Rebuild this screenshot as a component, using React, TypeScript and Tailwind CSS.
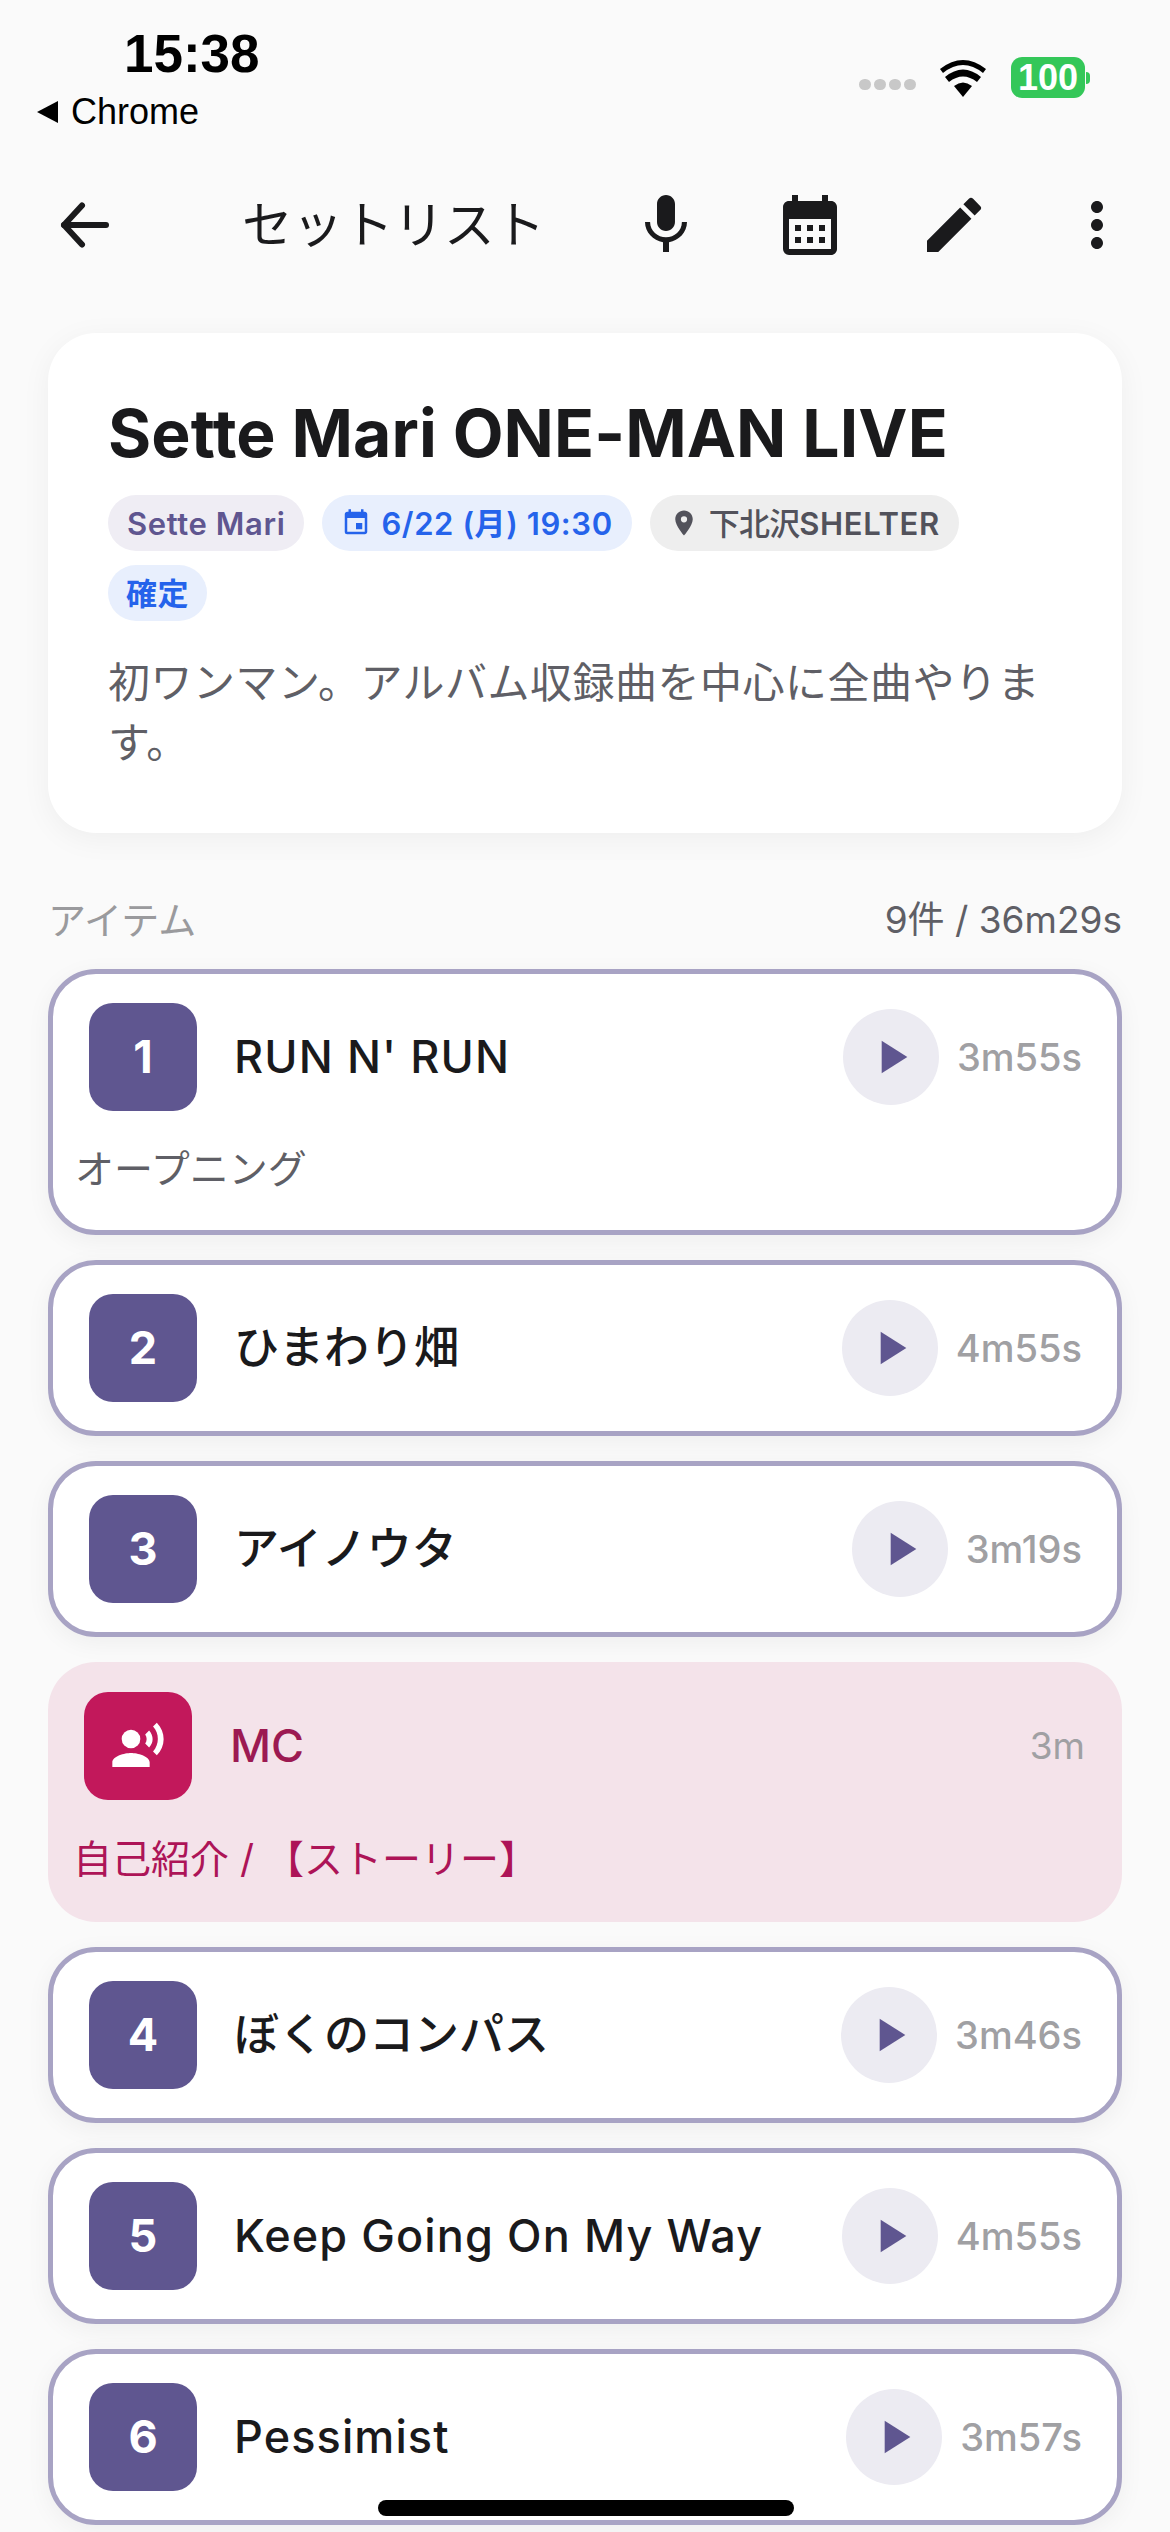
import { MdMic, MdCalendarMonth, MdEdit, MdMoreVert, MdPlace, MdEvent, MdPlayArrow, MdRecordVoiceOver } from 'react-icons/md';

const FONT = 'font-["Inter","Noto_Sans_CJK_JP",sans-serif]';

const songs = [
  { no: 1, title: "RUN N' RUN", time: '3m55s', note: 'オープニング' },
  { no: 2, title: 'ひまわり畑', time: '4m55s', jp: true },
  { no: 3, title: 'アイノウタ', time: '3m19s', jp: true },
  { mc: true, title: 'MC', time: '3m', note: '自己紹介 / 【ストーリー】' },
  { no: 4, title: 'ぼくのコンパス', time: '3m46s', jp: true },
  { no: 5, title: 'Keep Going On My Way', time: '4m55s' },
  { no: 6, title: 'Pessimist', time: '3m57s' },
];

const StatusBar = () => (
  <div className="relative h-[156px] font-['Liberation_Sans',sans-serif] text-black">
    <div className="absolute left-[124px] top-[24px] text-[53px] leading-[60px] font-bold">15:38</div>
    <div className="absolute left-[37px] top-[92px] flex items-center gap-[13px]">
      <div className="h-0 w-0 border-y-[11px] border-r-[21px] border-y-transparent border-r-black" />
      <span className="text-[36px] leading-[40px]">Chrome</span>
    </div>
    <div className="absolute right-[80px] top-[57px] flex items-center">
      <div className="mr-[22px] mt-[14px] flex gap-[3px]">
        {[0, 1, 2, 3].map((i) => (
          <div key={i} className="h-[11px] w-[12px] rounded-full bg-[#c8c8c8]" />
        ))}
      </div>
      <svg width="50" height="38" viewBox="0 0 50 38" className="mr-[23px]">
        <path d="M25 38 L16 27 Q25 20 34 27 Z" fill="#000" />
        <path d="M11 21 Q25 10 39 21 L43 16 Q25 1 7 16 Z" fill="#000" transform="translate(0 2)" />
        <path d="M2 10 Q25 -8 48 10 L45 14 Q25 -2 5 14 Z" fill="#000" />
      </svg>
      <div className="flex h-[41px] w-[74px] items-center justify-center rounded-[11px] bg-[#34c759] text-[36px] font-bold leading-none text-white">100</div>
      <div className="ml-[1px] h-[12px] w-[4px] rounded-r-full bg-[#34c759]" />
    </div>
  </div>
);

const TopBar = () => (
  <div className="flex h-[138px] items-center text-[#1a1a1c]">
    <svg width="72" height="72" viewBox="0 0 24 24" fill="none" stroke="currentColor" strokeWidth="2" strokeLinecap="round" strokeLinejoin="round" className="ml-[49px]">
      <path d="M19 12H5" />
      <path d="M11 5.5 5 12l6 6.5" />
    </svg>
    <div className="ml-[121px] flex-1 text-[50.5px] leading-none">セットリスト</div>
    <MdMic className="mr-[72px] text-[72px]" />
    <MdCalendarMonth className="mr-[72px] text-[72px]" />
    <MdEdit className="mr-[71px] text-[72px]" />
    <MdMoreVert className="mr-[37px] text-[72px]" />
  </div>
);

const Chip = ({ className, children }: { className: string; children: React.ReactNode }) => (
  <div className={`flex h-[56px] items-center gap-[10px] rounded-full text-[31px] font-semibold leading-none tracking-[0.6px] ${className}`}>{children}</div>
);

const EventCard = () => (
  <div className="mx-[48px] mt-[39px] h-[500px] rounded-[48px] bg-white px-[60px] pt-[60px] shadow-[0_6px_30px_rgba(0,0,0,0.05)]">
    <h1 className="text-[66px] font-bold leading-[80px] tracking-[0.1px] text-[#1a1a1c]">Sette Mari ONE-MAN LIVE</h1>
    <div className="mt-[22px] flex flex-wrap gap-x-[18px] gap-y-[14px]">
      <Chip className="bg-[#efedf4] px-[19px] text-[#5f5690]">Sette Mari</Chip>
      <Chip className="bg-[#e8effd] px-[19px] text-[#2563eb]"><MdEvent className="text-[30px]" />6/22 (月) 19:30</Chip>
      <Chip className="bg-[#eeeeee] px-[19px] text-[#52525b]"><MdPlace className="text-[30px]" /><span><span className="font-medium tracking-[-0.8px]">下北沢</span>SHELTER</span></Chip>
      <Chip className="bg-[#e8effd] px-[18px] font-medium text-[#2563eb]">確定</Chip>
    </div>
    <p className="mt-[32px] text-[42px] leading-[60px] tracking-[0.5px] text-[#5f5f66]">初ワンマン。アルバム収録曲を中心に全曲やります。</p>
  </div>
);

const SongRow = ({ item }: { item: (typeof songs)[number] }) => {
  if (item.mc) {
    return (
      <div className="h-[260px] rounded-[48px] bg-[#f4e3ea] pl-[36px] pr-[37px] pt-[30px]">
        <div className="flex items-center">
          <div className="flex h-[108px] w-[108px] shrink-0 items-center justify-center rounded-[24px] bg-[#c2185b] text-[56px] text-white">
            <MdRecordVoiceOver />
          </div>
          <div className="ml-[38px] flex-1 text-[45px] font-medium text-[#9c1a52]">{item.title}</div>
          <div className="text-[37px] text-[#a0a0a3]">{item.time}</div>
        </div>
        <div className="-ml-[11px] mt-[32px] text-[39px] leading-[54px] text-[#ad1457]">{item.note}</div>
      </div>
    );
  }
  return (
    <div className={`rounded-[48px] border-[5px] border-[#a8a3c4] bg-white pl-[36px] pr-[35px] pt-[29px] shadow-[0_6px_24px_rgba(0,0,0,0.05)] ${item.note ? 'h-[266px]' : 'h-[176px]'}`}>
      <div className="flex h-[108px] items-center">
        <div className="flex h-[108px] w-[108px] shrink-0 items-center justify-center rounded-[24px] bg-[#5f5690] text-[45px] font-bold text-white">{item.no}</div>
        <div className={`ml-[37px] flex-1 text-[45px] font-medium text-[#1a1a1c] ${item.jp ? '' : 'tracking-[1.1px]'}`}>{item.title}</div>
        <div className="flex h-[96px] w-[96px] items-center justify-center rounded-full bg-[#ecebf2] text-[56px] text-[#5f5690]"><MdPlayArrow /></div>
        <div className="ml-[18px] text-[38px] font-medium text-[#a0a0a3]">{item.time}</div>
      </div>
      {item.note && <div className="-ml-[14px] mt-[31px] text-[39px] leading-[54px] text-[#5f5f66]">{item.note}</div>}
    </div>
  );
};

export default function App() {
  return (
    <div className={`relative h-[2532px] overflow-hidden bg-[#fafafa] ${FONT}`}>
      <StatusBar />
      <TopBar />
      <EventCard />
      <div className="mx-[48px] mt-[63px] flex items-center justify-between leading-[48px]">
        <span className="text-[38px] text-[#9a9a9d]">アイテム</span>
        <span className="text-[37px] text-[#5f5f66]">9件 / 36m29s</span>
      </div>
      <div className="mx-[48px] mt-[25px] flex flex-col gap-[25px]">
        {songs.map((item, i) => (
          <SongRow key={i} item={item} />
        ))}
      </div>
      <div className="absolute bottom-[16px] left-[378px] h-[16px] w-[416px] rounded-full bg-black" />
    </div>
  );
}
